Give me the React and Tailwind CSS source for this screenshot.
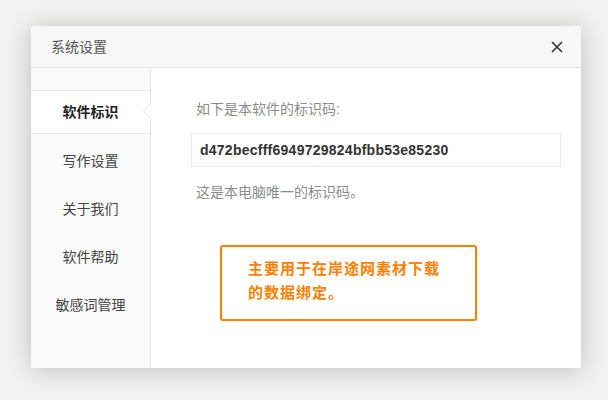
import React from "react";

const FONT = { fontFamily: '"Liberation Sans", "Noto Sans CJK SC", sans-serif' };

function SideItem({ children }) {
  return (
    <div className="h-[48px] flex items-center justify-center text-[14px] leading-[20px] text-[#444]">
      {children}
    </div>
  );
}

export default function App() {
  return (
    <div
      className="w-[608px] h-[400px] bg-[#f2f2f0] pt-[26px] pl-[31px] overflow-hidden"
      style={FONT}
    >
      <div className="w-[550px] h-[342px] bg-white flex flex-col shadow-[0_2px_24px_rgba(0,0,0,0.22)]">
        <div className="h-[42px] shrink-0 bg-[#f7f7f7] border-b border-[#e6e6e6] flex items-center justify-between pl-[20px] pr-[18px]">
          <span className="text-[14px] leading-[20px] text-[#555]">系统设置</span>
          <svg width="12" height="12" viewBox="0 0 12 12" className="mt-[1px]">
            <path d="M1 1 L11 11 M11 1 L1 11" stroke="#333" strokeWidth="1.6" />
          </svg>
        </div>
        <div className="flex flex-1">
          <div className="w-[120px] shrink-0 bg-[#fafafa] border-r border-[#e6e6e6] pt-[22px]">
            <div className="relative h-[44px] bg-white border-y border-[#e6e6e6] flex items-center justify-center text-[14px] leading-[20px] font-bold text-[#222]">
              软件标识
              <svg
                width="9"
                height="16"
                viewBox="0 0 9 16"
                className="absolute left-[112px] top-[13px]"
              >
                <rect x="6" y="0" width="3" height="16" fill="#fff" />
                <polyline points="7.5,0 0.5,7.5 7.5,15" fill="#fff" stroke="#e3e3e3" strokeWidth="1" />
              </svg>
            </div>
            <div className="pt-[3px]">
              <SideItem>写作设置</SideItem>
              <SideItem>关于我们</SideItem>
              <SideItem>软件帮助</SideItem>
              <SideItem>敏感词管理</SideItem>
            </div>
          </div>
          <div className="flex-1 pl-[40px] pr-[20px] pt-[31px] flex flex-col">
            <div className="ml-[5px] text-[14px] leading-[20px] text-[#8c8c8c]">如下是本软件的标识码:</div>
            <div className="mt-[14px] h-[34px] border border-[#ececec] flex items-center pl-[8px] text-[14px] font-bold text-[#333] tracking-[0.25px]">
              d472becfff6949729824bfbb53e85230
            </div>
            <div className="mt-[15px] ml-[5px] text-[14px] leading-[20px] text-[#8c8c8c]">这是本电脑唯一的标识码。</div>
            <div className="mt-[43px] ml-[29px] w-[257px] h-[76px] border-2 border-[#ff8000] rounded-[3px] pl-[26px] pt-[10px] text-[15px] leading-[24px] font-bold text-[#ff8000] tracking-[1px]">
              主要用于在岸途网素材下载
              <br />
              的数据绑定。
            </div>
          </div>
        </div>
      </div>
    </div>
  );
}
